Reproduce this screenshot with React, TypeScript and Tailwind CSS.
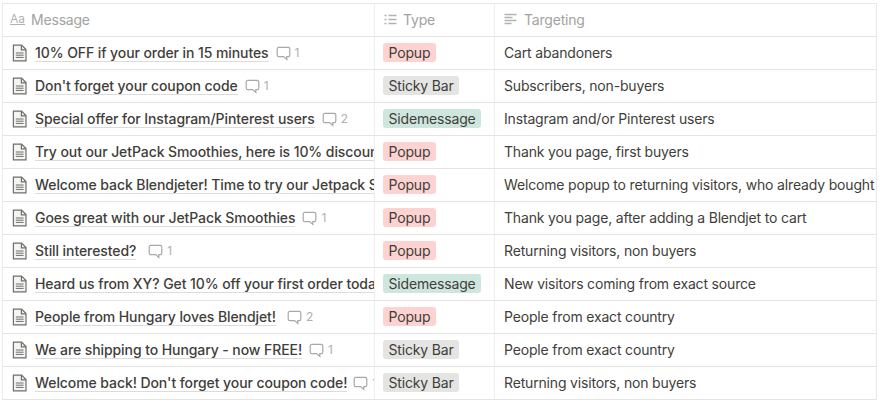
import type { ReactNode } from "react";

type Tag = "Popup" | "Sticky Bar" | "Sidemessage";

const tagClass: Record<Tag, string> = {
	Popup: "bg-[#fdd3d2]",
	"Sticky Bar": "bg-[#e4e4e3]",
	Sidemessage: "bg-[#cfe6de]",
};

const rows: { title: string; comments?: number; gap?: string; tag: Tag; target: string }[] = [
	{ title: "10% OFF if your order in 15 minutes", comments: 1, tag: "Popup", target: "Cart abandoners" },
	{ title: "Don't forget your coupon code", comments: 1, tag: "Sticky Bar", target: "Subscribers, non-buyers" },
	{ title: "Special offer for Instagram/Pinterest users", comments: 2, tag: "Sidemessage", target: "Instagram and/or Pinterest users" },
	{ title: "Try out our JetPack Smoothies, here is 10% discount", tag: "Popup", target: "Thank you page, first buyers" },
	{ title: "Welcome back Blendjeter! Time to try our Jetpack Smoothies", tag: "Popup", target: "Welcome popup to returning visitors, who already bought" },
	{ title: "Goes great with our JetPack Smoothies", comments: 1, tag: "Popup", target: "Thank you page, after adding a Blendjet to cart" },
	{ title: "Still interested?", comments: 1, gap: "ml-[12px]", tag: "Popup", target: "Returning visitors, non buyers" },
	{ title: "Heard us from XY? Get 10% off your first order today", tag: "Sidemessage", target: "New visitors coming from exact source" },
	{ title: "People from Hungary loves Blendjet!", comments: 2, gap: "ml-[11px]", tag: "Popup", target: "People from exact country" },
	{ title: "We are shipping to Hungary - now FREE!", comments: 1, tag: "Sticky Bar", target: "People from exact country" },
	{ title: "Welcome back! Don't forget your coupon code!", comments: 1, gap: "ml-[6px]", tag: "Sticky Bar", target: "Returning visitors, non buyers" },
];

function PageIcon() {
	return (
		<svg width="16" height="18" viewBox="0 0 16 18" fill="none" stroke="#6f6e6b" strokeWidth="1.2" className="shrink-0">
			<path d="M1.4 1.2h8.2L14 5.6v11.2H1.4z" fill="#f4f4f3" />
			<path d="M9.4 1.4v4.4H14" />
			<path d="M3.8 9h7.8M3.8 11.2h7.8M3.8 13.4h7.8" strokeWidth="1" />
		</svg>
	);
}

function CommentIcon() {
	return (
		<svg width="15" height="15" viewBox="0 0 15 15" fill="none" stroke="#a9a8a5" strokeWidth="1.2" className="shrink-0">
			<path d="M2.8 1.4h9.4a1.6 1.6 0 0 1 1.6 1.6v6a1.6 1.6 0 0 1-1.6 1.6h-1.4v2.8L7.6 10.6H2.8A1.6 1.6 0 0 1 1.2 9V3a1.6 1.6 0 0 1 1.6-1.6z" />
		</svg>
	);
}

function ListIcon() {
	return (
		<svg width="13" height="13" viewBox="0 0 13 13" fill="none" stroke="#b3b2af" strokeWidth="1.3">
			<path d="M0.5 2.5h2M0.5 6.5h2M0.5 10.5h2M4.5 2.5h8M4.5 6.5h8M4.5 10.5h8" />
		</svg>
	);
}

function TextIcon() {
	return (
		<svg width="13" height="13" viewBox="0 0 13 13" fill="none" stroke="#b3b2af" strokeWidth="1.5">
			<path d="M0.5 1.5h12M0.5 4.5h8M0.5 7.5h12M0.5 10.5h7" />
		</svg>
	);
}

function HeaderCell({ icon, label, className }: { icon: ReactNode; label: string; className: string }) {
	return (
		<div className={`flex items-center pb-[2px] text-[14px] tracking-[-0.2px] text-[#a3a29f] ${className}`}>
			{icon}
			<span>{label}</span>
		</div>
	);
}

export default function App() {
	return (
		<div
			className="h-[403px] w-[880px] overflow-hidden bg-white pl-[2px] pt-[3px] text-[#37352f]"
			style={{ fontFamily: '"Inter", "Liberation Sans", sans-serif' }}
		>
			<div className="w-[875px] border-x border-t border-[#e9e9e8]">
				<div className="grid h-[33px] grid-cols-[372px_120px_1fr] border-b border-[#e4e4e3]">
					<HeaderCell
						className="border-r border-[#eeeeed] pl-[7px]"
						label="Message"
						icon={<span className="mr-[6px] text-[12px] leading-none tracking-normal text-[#b3b2af] underline">Aa</span>}
					/>
					<HeaderCell
						className="gap-[6px] border-r border-[#eeeeed] pl-[9px]"
						label="Type"
						icon={<ListIcon />}
					/>
					<HeaderCell className="gap-[7px] pl-[9px]" label="Targeting" icon={<TextIcon />} />
				</div>
				{rows.map((row) => (
					<div key={row.title} className="grid h-[33px] grid-cols-[372px_120px_1fr] border-b border-[#e4e4e3]">
						<div className="flex items-center overflow-hidden border-r border-[#eeeeed] pl-[9px]">
							<PageIcon />
							<span className="ml-[7px] shrink-0 whitespace-nowrap border-b border-[#dcdcda] text-[14px] leading-[17px] font-medium tracking-[-0.085px] text-[#3f3e3a]">
								{row.title}
							</span>
							{row.comments ? (
								<span className={`flex shrink-0 items-center gap-[4px] text-[12px] text-[#b0afac] ${row.gap ?? "ml-[7px]"}`}>
									<CommentIcon />
									{row.comments}
								</span>
							) : null}
						</div>
						<div className="flex items-center border-r border-[#eeeeed] pb-[1px] pl-[8px]">
							<span className={`rounded-[3px] px-[5.5px] text-[14px] leading-[19px] tracking-[-0.17px] text-[#3f3e3a] ${tagClass[row.tag]}`}>
								{row.tag}
							</span>
						</div>
						<div className="flex items-center overflow-hidden whitespace-nowrap pb-[2px] pl-[9px] text-[14px] tracking-[-0.17px] text-[#3f3e3a]">
							{row.target}
						</div>
					</div>
				))}
			</div>
		</div>
	);
}
